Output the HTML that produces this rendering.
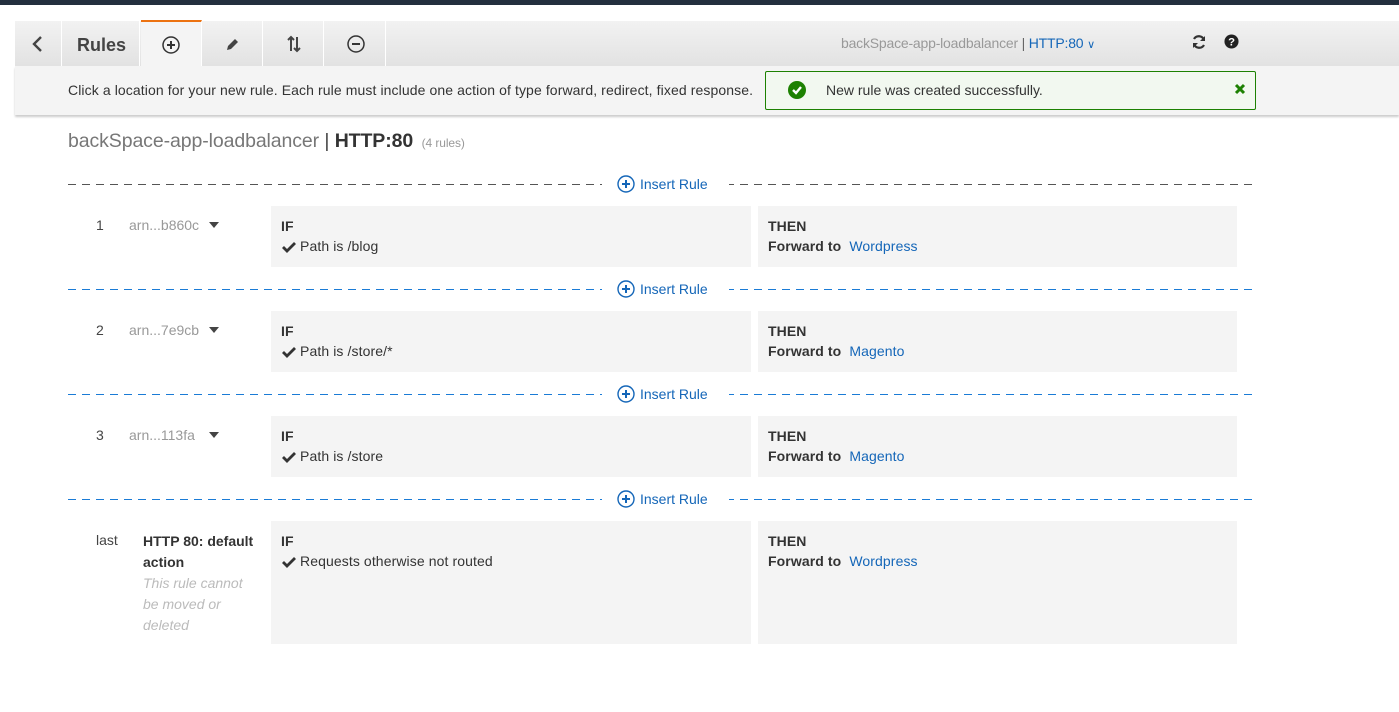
<!DOCTYPE html>
<html><head><meta charset="utf-8"><style>
body{margin:0;width:1399px;height:712px;background:#fff;font-family:"Liberation Sans",sans-serif;position:relative;overflow:hidden;color:#333}
.a{position:absolute}
.tab{position:absolute;top:21px;height:45px;background:linear-gradient(#f2f2f2,#e2e2e2);border-right:1px solid #fff;display:flex;align-items:center;justify-content:center;color:#444}
.dash{position:absolute;left:68px;width:1188px;height:1px;background:repeating-linear-gradient(90deg,#1a7bd6 0 8px,transparent 8px 14px)}
.ins{position:absolute;left:602px;width:127px;background:#fff;color:#1466b8;font-size:14px;display:flex;align-items:center;gap:5px;padding-left:15px;box-sizing:border-box;height:20px}
.box{position:absolute;background:#f4f4f4;font-size:14px;letter-spacing:0.1px}
.box b{display:block;margin:12px 0 4px 10px;color:#333}
.box .r{margin-left:11px}
.lnk{color:#1466b8}
.num{position:absolute;left:96px;font-size:14px;color:#444}
.arn{position:absolute;left:129px;font-size:14px;color:#999}
.arn:after{content:"";position:absolute;left:80px;top:5px;border:5px solid transparent;border-top:6px solid #444;border-bottom:0}
.ck{display:inline-block;vertical-align:-2px;margin-right:4px}
</style></head><body>
<div class="a" style="left:0;top:0;width:1399px;height:5px;background:#232f3e"></div>
<div class="a" style="left:15px;top:21px;width:1384px;height:45px;background:linear-gradient(#f2f2f2,#e2e2e2)"></div>
<div class="tab" style="left:15px;width:46px"><svg width="14" height="18" viewBox="0 0 14 18"><path d="M10 2L3 9l7 7" fill="none" stroke="#444" stroke-width="2.4"/></svg></div>
<div class="tab" style="left:64px;width:76px;font-weight:bold;font-size:18px;padding-top:3px;box-sizing:border-box">Rules</div>
<div class="tab" style="left:141px;width:60px;background:#f4f4f4;border-top:2px solid #ec7211;top:20px;height:46px"><svg width="20" height="20" viewBox="0 0 20 20"><circle cx="10" cy="10" r="8" fill="none" stroke="#333" stroke-width="1.5"/><path d="M10 6v8M6 10h8" stroke="#333" stroke-width="2"/></svg></div>
<div class="tab" style="left:204px;width:58px"><svg width="16" height="16" viewBox="0 0 16 16"><path d="M2 14l1-4 7-7 3 3-7 7z" fill="#444"/></svg></div>
<div class="tab" style="left:265px;width:58px"><svg width="16" height="18" viewBox="0 0 16 18"><path d="M5 16V2M2 5l3-3 3 3M11 2v14M8 13l3 3 3-3" fill="none" stroke="#444" stroke-width="2"/></svg></div>
<div class="tab" style="left:326px;width:59px"><svg width="20" height="20" viewBox="0 0 20 20"><circle cx="10" cy="10" r="8" fill="none" stroke="#333" stroke-width="1.5"/><path d="M6 10h8" stroke="#333" stroke-width="2"/></svg></div>
<div class="a" style="left:841px;top:35px;font-size:14px;color:#999;letter-spacing:-0.2px">backSpace-app-loadbalancer <span style="color:#666">|</span> <span class="lnk">HTTP:80</span> <span class="lnk" style="font-size:11px">&#x2228;</span></div>
<svg class="a" style="left:1191px;top:34px" width="16" height="16" viewBox="0 0 16 16"><path d="M13 6A5.5 5.5 0 0 0 3 5M3 10a5.5 5.5 0 0 0 10 1" fill="none" stroke="#333" stroke-width="2.2"/><path d="M14 2v5H9zM2 14V9h5z" fill="#333"/></svg>
<svg class="a" style="left:1224px;top:34px" width="15" height="15" viewBox="0 0 16 16"><circle cx="8" cy="8" r="7.5" fill="#222"/><text x="8" y="12.5" font-size="12" font-weight="bold" text-anchor="middle" fill="#fff" font-family="Liberation Sans">?</text></svg>
<div class="a" style="left:15px;top:66px;width:1384px;height:49px;background:#f4f4f4;box-shadow:0 2px 2px #ccc"></div>
<div class="a" style="left:68px;top:82px;font-size:14px;color:#333;letter-spacing:0.1px">Click a location for your new rule. Each rule must include one action of type forward, redirect, fixed response.</div>
<div class="a" style="left:765px;top:71px;width:489px;height:37px;border:1px solid #1d8102;border-radius:2px;background:#f2f8f0"></div>
<svg class="a" style="left:788px;top:81px" width="18" height="18" viewBox="0 0 18 18"><circle cx="9" cy="9" r="9" fill="#1d8102"/><path d="M5 9l3 3 5-6" fill="none" stroke="#fff" stroke-width="2.4"/></svg>
<div class="a" style="left:826px;top:82px;font-size:14px;color:#333">New rule was created successfully.</div>
<svg class="a" style="left:1234px;top:83px" width="12" height="12" viewBox="0 0 12 12"><path d="M2 2l8 8M10 2l-8 8" stroke="#1d8102" stroke-width="3"/></svg>
<div class="a" style="left:68px;top:130px;font-size:19.5px;color:#777;letter-spacing:-0.1px">backSpace-app-loadbalancer <span style="color:#444">|</span> <b style="color:#333">HTTP:80</b> <span style="font-size:12px;color:#999">&nbsp;(4 rules)</span></div>

<div class="dash" style="top:184px;background:repeating-linear-gradient(90deg,#555 0 8px,transparent 8px 14px)"></div>
<div class="dash" style="top:289px"></div>
<div class="dash" style="top:394px"></div>
<div class="dash" style="top:499px"></div>
<div class="ins" style="top:174px"><svg width="18" height="18" viewBox="0 0 18 18"><circle cx="9" cy="9" r="8" fill="none" stroke="#1466b8" stroke-width="1.4"/><path d="M9 5v8M5 9h8" stroke="#1466b8" stroke-width="2"/></svg>Insert Rule</div>
<div class="ins" style="top:279px"><svg width="18" height="18" viewBox="0 0 18 18"><circle cx="9" cy="9" r="8" fill="none" stroke="#1466b8" stroke-width="1.4"/><path d="M9 5v8M5 9h8" stroke="#1466b8" stroke-width="2"/></svg>Insert Rule</div>
<div class="ins" style="top:384px"><svg width="18" height="18" viewBox="0 0 18 18"><circle cx="9" cy="9" r="8" fill="none" stroke="#1466b8" stroke-width="1.4"/><path d="M9 5v8M5 9h8" stroke="#1466b8" stroke-width="2"/></svg>Insert Rule</div>
<div class="ins" style="top:489px"><svg width="18" height="18" viewBox="0 0 18 18"><circle cx="9" cy="9" r="8" fill="none" stroke="#1466b8" stroke-width="1.4"/><path d="M9 5v8M5 9h8" stroke="#1466b8" stroke-width="2"/></svg>Insert Rule</div>

<div class="num" style="top:217px">1</div><div class="arn" style="top:217px">arn...b860c</div>
<div class="box" style="left:271px;top:206px;width:480px;height:61px"><b>IF</b><span class="r"><svg class="ck" width="14" height="12" viewBox="0 0 14 12"><path d="M1 6l4 4 8-8" fill="none" stroke="#333" stroke-width="2.8"/></svg>Path is /blog</span></div>
<div class="box" style="left:758px;top:206px;width:479px;height:61px"><b>THEN</b><span style="margin-left:10px"><b style="display:inline;margin:0">Forward to</b>&nbsp; <span class="lnk">Wordpress</span></span></div>

<div class="num" style="top:322px">2</div><div class="arn" style="top:322px">arn...7e9cb</div>
<div class="box" style="left:271px;top:311px;width:480px;height:61px"><b>IF</b><span class="r"><svg class="ck" width="14" height="12" viewBox="0 0 14 12"><path d="M1 6l4 4 8-8" fill="none" stroke="#333" stroke-width="2.8"/></svg>Path is /store/*</span></div>
<div class="box" style="left:758px;top:311px;width:479px;height:61px"><b>THEN</b><span style="margin-left:10px"><b style="display:inline;margin:0">Forward to</b>&nbsp; <span class="lnk">Magento</span></span></div>

<div class="num" style="top:427px">3</div><div class="arn" style="top:427px">arn...113fa</div>
<div class="box" style="left:271px;top:416px;width:480px;height:61px"><b>IF</b><span class="r"><svg class="ck" width="14" height="12" viewBox="0 0 14 12"><path d="M1 6l4 4 8-8" fill="none" stroke="#333" stroke-width="2.8"/></svg>Path is /store</span></div>
<div class="box" style="left:758px;top:416px;width:479px;height:61px"><b>THEN</b><span style="margin-left:10px"><b style="display:inline;margin:0">Forward to</b>&nbsp; <span class="lnk">Magento</span></span></div>

<div class="num" style="top:532px">last</div>
<div class="a" style="left:143px;top:531px;width:115px;font-size:14px;line-height:21px"><b>HTTP 80: default action</b><br><i style="color:#bbb">This rule cannot be moved or deleted</i></div>
<div class="box" style="left:271px;top:521px;width:480px;height:123px"><b>IF</b><span class="r"><svg class="ck" width="14" height="12" viewBox="0 0 14 12"><path d="M1 6l4 4 8-8" fill="none" stroke="#333" stroke-width="2.8"/></svg>Requests otherwise not routed</span></div>
<div class="box" style="left:758px;top:521px;width:479px;height:123px"><b>THEN</b><span style="margin-left:10px"><b style="display:inline;margin:0">Forward to</b>&nbsp; <span class="lnk">Wordpress</span></span></div>
</body></html>
